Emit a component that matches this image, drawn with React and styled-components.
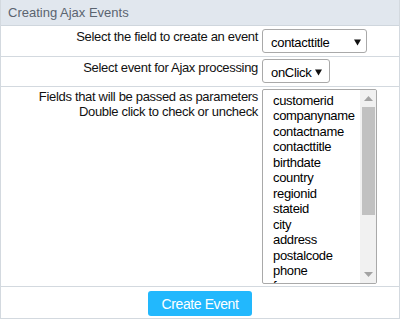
import React from "react";
import styled, { createGlobalStyle } from "styled-components";

const Global = createGlobalStyle`
  html, body { margin: 0; padding: 0; background: #ffffff; }
  body { font-family: "Liberation Sans", Arial, sans-serif; font-size: 13px; color: #111; }
`;

const Frame = styled.div`
  width: 398px;
  border-left: 1px solid #d3d9df;
  border-right: 1px solid #d3d9df;
  border-bottom: 1px solid #d3d9df;
  background: #fff;
`;

const Header = styled.div`
  height: 25px;
  line-height: 25px;
  padding-left: 7px;
  background: #e1e7ee;
  border-bottom: 1px solid #cfd6dd;
  color: #5b6470;
  font-size: 13px;
`;

const Row = styled.div`
  display: grid;
  grid-template-columns: 261px 1fr;
  height: ${(p) => p.$h}px;
  border-bottom: 1px solid #d3d9df;
  box-sizing: border-box;
`;

const Label = styled.div`
  text-align: right;
  padding: ${(p) => p.$pt}px 4px 0 0;
  line-height: 15px;
  letter-spacing: -0.32px;
  color: #111;
`;

const Cell = styled.div`
  padding-top: ${(p) => p.$pt}px;
`;

const SelectBox = styled.div`
  box-sizing: border-box;
  width: ${(p) => p.$w}px;
  height: 24px;
  border: 1px solid #a9a9a9;
  border-radius: 3px;
  display: flex;
  align-items: center;
  justify-content: space-between;
  padding: 2px ${(p) => p.$pr}px 0 8px;
  color: #000;
  letter-spacing: -0.3px;
  background: #fff;
`;

const ListBox = styled.div`
  box-sizing: border-box;
  width: 115px;
  height: 195px;
  border: 1px solid #a9a9a9;
  border-radius: 2px;
  display: flex;
  overflow: hidden;
  background: #fff;
`;

const Items = styled.div`
  flex: 1;
  padding: 3px 0 0 10px;
  line-height: 15.45px;
  letter-spacing: -0.33px;
  color: #000;
  overflow: hidden;
`;

const Scrollbar = styled.div`
  width: 16px;
  background: #f1f1f1;
  display: flex;
  flex-direction: column;
  align-items: center;
`;

const ScrollBtn = styled.div`
  height: 17px;
  width: 100%;
  display: flex;
  align-items: center;
  justify-content: center;
`;

const Track = styled.div`
  flex: 1;
  width: 100%;
  display: flex;
  justify-content: center;
`;

const Thumb = styled.div`
  width: 13px;
  height: 108px;
  background: #c1c1c1;
`;

const ButtonRow = styled.div`
  height: 31px;
  display: flex;
  justify-content: center;
  padding-top: 4px;
  box-sizing: border-box;
`;

const Button = styled.button`
  width: 104px;
  height: 25px;
  border: none;
  border-radius: 3px;
  background: #22b8fd;
  color: #fff;
  font-family: "Liberation Sans", Arial, sans-serif;
  font-size: 14px;
  letter-spacing: -0.4px;
  padding: 0;
  cursor: pointer;
`;

const fields = [
  "customerid", "companyname", "contactname", "contacttitle", "birthdate",
  "country", "regionid", "stateid", "city", "address", "postalcode", "phone", "fax",
];

const Tri = ({ up }) => (
  <svg width="9" height="5" viewBox="0 0 9 5">
    <polygon points={up ? "0,5 9,5 4.5,0" : "0,0 9,0 4.5,5"} fill="#a3a3a3" />
  </svg>
);

const DropArrow = () => (
  <svg width="7" height="7" viewBox="0 0 7 7">
    <polygon points="0,0.5 7,0.5 3.5,6.5" fill="#111" />
  </svg>
);

export default function App() {
  return (
    <>
      <Global />
      <Frame>
        <Header>Creating Ajax Events</Header>
        <Row $h={31}>
          <Label $pt={3}>Select the field to create an event</Label>
          <Cell $pt={3}>
            <SelectBox $w={105} $pr={5}>
              <span>contacttitle</span>
              <DropArrow />
            </SelectBox>
          </Cell>
        </Row>
        <Row $h={30}>
          <Label $pt={3}>Select event for Ajax processing</Label>
          <Cell $pt={2}>
            <SelectBox $w={68} $pr={7}>
              <span>onClick</span>
              <DropArrow />
            </SelectBox>
          </Cell>
        </Row>
        <Row $h={200}>
          <Label $pt={2}>
            Fields that will be passed as parameters
            <br />
            Double click to check or uncheck
          </Label>
          <Cell $pt={2}>
            <ListBox>
              <Items>
                {fields.map((f) => (
                  <div key={f}>{f}</div>
                ))}
              </Items>
              <Scrollbar>
                <ScrollBtn><Tri up /></ScrollBtn>
                <Track><Thumb /></Track>
                <ScrollBtn><Tri /></ScrollBtn>
              </Scrollbar>
            </ListBox>
          </Cell>
        </Row>
        <ButtonRow>
          <Button>Create Event</Button>
        </ButtonRow>
      </Frame>
    </>
  );
}
